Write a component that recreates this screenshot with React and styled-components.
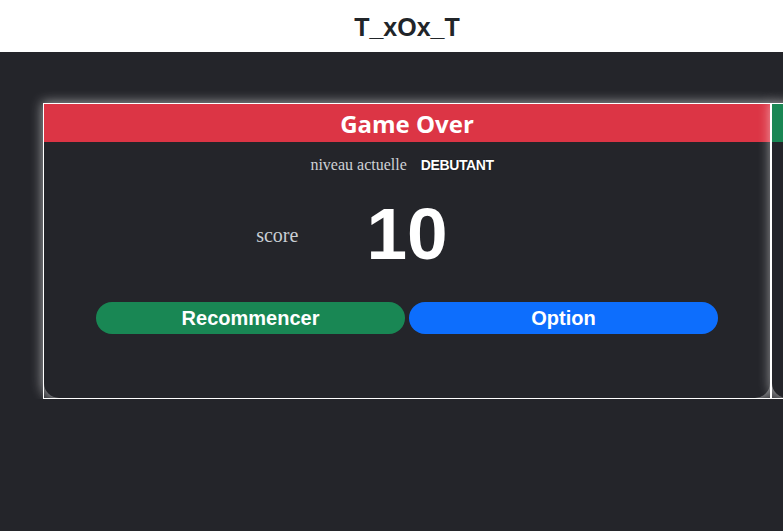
import React from "react";
import styled, { createGlobalStyle } from "styled-components";

const texts = {
  title: "T_xOx_T",
  gameOver: "Game Over",
  level: "niveau actuelle",
  score: "score",
  restart: "Recommencer",
  option: "Option",
};

const GlobalStyle = createGlobalStyle`
  html, body {
    margin: 0;
    padding: 0;
    height: 100%;
    overflow: hidden;
    background-color: #24252a;
  }
  #root {
    height: 100%;
  }
`;

const Page = styled.div`
  height: 100%;
  display: flex;
  flex-direction: column;
  background-color: #24252a;
`;

const Header = styled.header`
  height: 52px;
  flex-shrink: 0;
  display: flex;
  align-items: center;
  justify-content: center;
  padding-left: 31px;
  background-color: #ffffff;
`;

const Title = styled.h1`
  margin: 0;
  font-family: "Liberation Sans", Arial, sans-serif;
  font-weight: 700;
  font-size: 25px;
  color: #212529;
  padding-top: 2px;
`;

const Track = styled.div`
  display: flex;
  padding: 51px 0 0 43px;
  overflow: hidden;
`;

const Slide = styled.div`
  flex-shrink: 0;
  width: 726px;
  height: 294px;
  border: 1px solid #ffffff;
`;

const Card = styled.div`
  height: 100%;
  display: flex;
  flex-direction: column;
  border-radius: 0 0 15px 15px;
  background-color: #24252a;
  box-shadow: 0 0 12px 2px rgba(255, 255, 255, 0.55);
`;

const CardHeader = styled.div`
  height: 38px;
  flex-shrink: 0;
  display: flex;
  align-items: center;
  justify-content: center;
  background-color: ${(p) => p.$color};
  font-family: "Open Sans", "Liberation Sans", sans-serif;
  font-weight: 700;
  font-size: 24px;
  color: #ffffff;
`;

const LevelRow = styled.div`
  display: flex;
  justify-content: center;
  align-items: center;
  gap: 14px;
  padding: 13px 10px 0 0;
  height: 20px;
`;

const LevelLabel = styled.span`
  font-family: "Liberation Serif", "Times New Roman", serif;
  font-size: 16px;
  color: #cfd2d6;
`;

const LevelValue = styled.span`
  font-family: "Liberation Sans", Arial, sans-serif;
  font-weight: 700;
  font-size: 14px;
  letter-spacing: -0.4px;
  color: #ffffff;
  text-shadow: 0 0 1px #000;
`;

const ScoreRow = styled.div`
  display: grid;
  grid-template-columns: 1fr auto 1fr;
  align-items: center;
  margin-top: 23px;
`;

const ScoreLabel = styled.span`
  justify-self: end;
  margin-right: 68px;
  padding-top: 2px;
  font-family: "Liberation Serif", "Times New Roman", serif;
  font-size: 20px;
  color: #c9ced4;
`;

const ScoreValue = styled.span`
  font-family: "Liberation Sans", Arial, sans-serif;
  font-weight: 700;
  font-size: 73px;
  line-height: 72px;
  color: #ffffff;
`;

const Buttons = styled.div`
  display: flex;
  gap: 4px;
  width: 622px;
  margin: 32px auto 0;
`;

const Button = styled.button`
  flex: 1;
  height: 32px;
  border: none;
  border-radius: 16px;
  padding: 0;
  background-color: ${(p) => p.$color};
  font-family: "Liberation Sans", Arial, sans-serif;
  font-weight: 700;
  font-size: 20px;
  color: #ffffff;
  cursor: pointer;
`;

const GameCard = ({ color, title, level, score }) => (
  <Slide>
    <Card>
      <CardHeader $color={color}>{title}</CardHeader>
      <LevelRow>
        <LevelLabel>{texts.level}</LevelLabel>
        <LevelValue>{level}</LevelValue>
      </LevelRow>
      <ScoreRow>
        <ScoreLabel>{texts.score}</ScoreLabel>
        <ScoreValue>{score}</ScoreValue>
        <span />
      </ScoreRow>
      <Buttons>
        <Button $color="#198754">{texts.restart}</Button>
        <Button $color="#0d6efd">{texts.option}</Button>
      </Buttons>
    </Card>
  </Slide>
);

const App = () => (
  <Page>
    <GlobalStyle />
    <Header>
      <Title>{texts.title}</Title>
    </Header>
    <Track>
      <GameCard color="#dc3545" title={texts.gameOver} level="DEBUTANT" score={10} />
      <GameCard color="#198754" title="Victoire" level="DEBUTANT" score={10} />
    </Track>
  </Page>
);

export default App;
